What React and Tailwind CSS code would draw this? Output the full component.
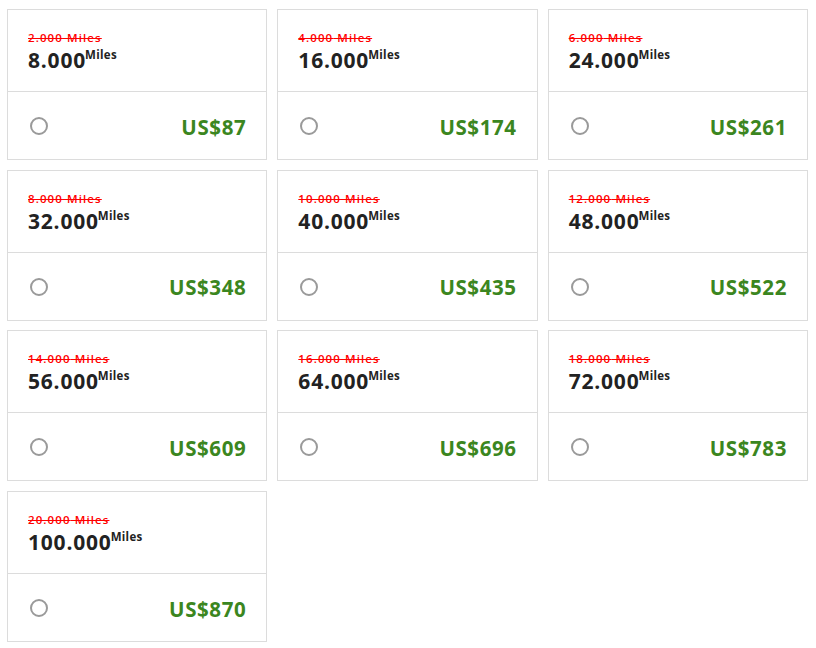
import React, { useState } from "react";

const packages = [
  { bonus: "2.000", miles: "8.000", price: "87" },
  { bonus: "4.000", miles: "16.000", price: "174" },
  { bonus: "6.000", miles: "24.000", price: "261" },
  { bonus: "8.000", miles: "32.000", price: "348" },
  { bonus: "10.000", miles: "40.000", price: "435" },
  { bonus: "12.000", miles: "48.000", price: "522" },
  { bonus: "14.000", miles: "56.000", price: "609" },
  { bonus: "16.000", miles: "64.000", price: "696" },
  { bonus: "18.000", miles: "72.000", price: "783" },
  { bonus: "20.000", miles: "100.000", price: "870" },
];

const MilesCard = ({ item, selected, onSelect }) => {
  return (
    <label className="flex flex-col h-[151px] border border-[#dcdcdc] bg-white cursor-pointer">
      <div className="h-[82px] border-b border-[#dcdcdc] pl-[20px] pt-[21px]">
        <div className="text-[11.5px] leading-[14px] font-semibold text-[#ff0000] tracking-[1.1px] line-through decoration-1">
          {item.bonus} Miles
        </div>
        <div className="flex items-start text-[#222] mt-[2px]">
          <span className="text-[21px] leading-[26px] font-bold tracking-[0.8px]">{item.miles}</span>
          <span className="text-[11.5px] leading-[14px] font-bold tracking-[0.3px] mt-[1px] -ml-[1px]">Miles</span>
        </div>
      </div>
      <div className="flex-1 flex items-center justify-between pl-[22px] pr-[20px] pt-[1px]">
        <input
          type="radio"
          name="miles"
          checked={selected}
          onChange={onSelect}
          className="appearance-none w-[18px] h-[18px] rounded-full border-2 border-[#9a9a9a] bg-white checked:border-[#3b8620] checked:border-[5px] m-0"
        />
        <span className="text-[20.5px] leading-[28px] font-bold text-[#3b8620] tracking-[0.6px] mt-[1px]">US${item.price}</span>
      </div>
    </label>
  );
};

export default function App() {
  const [selected, setSelected] = useState(null);

  return (
    <div className="w-[816px] min-h-[648px] bg-white pt-[9px] pl-[7px] pr-[8px]" style={{ fontFamily: "'Open Sans', 'Liberation Sans', sans-serif" }}>
      <div className="grid grid-cols-3 gap-x-[10px] gap-y-[9.7px]">
        {packages.map((item, i) => (
          <MilesCard key={i} item={item} selected={selected === i} onSelect={() => setSelected(i)} />
        ))}
      </div>
    </div>
  );
}
